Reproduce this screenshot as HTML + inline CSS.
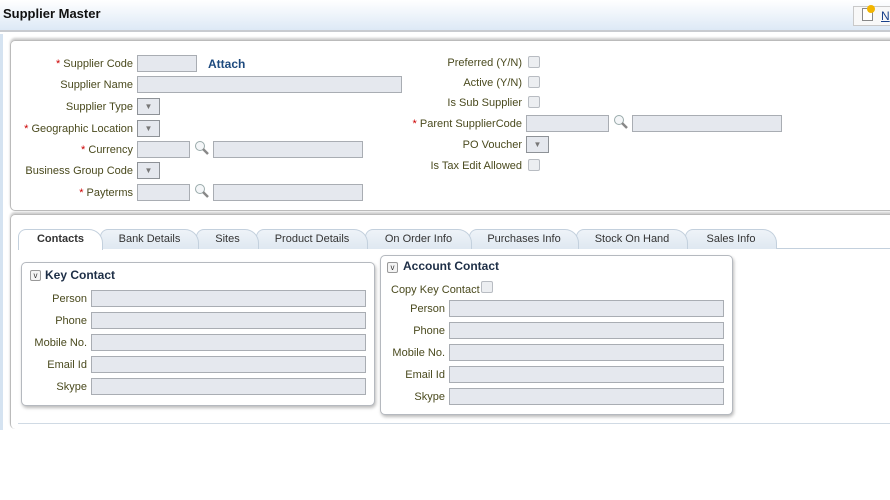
<!DOCTYPE html>
<html><head><style>
*{margin:0;padding:0;box-sizing:border-box}
body{width:890px;height:500px;background:#fff;font-family:"Liberation Sans",Tahoma,sans-serif;font-size:11px;color:#4a4a1e;position:relative;overflow:hidden}
.a{position:absolute}
.l{position:absolute;text-align:right;white-space:nowrap;line-height:16px}
.r{color:#c00}
.i{position:absolute;height:17px;background:#e5e8ee;border:1px solid #a9adb3}
.s{position:absolute;width:23px;height:17px;background:#e5e8ee;border:1px solid #8e9297;font-size:8px;color:#777;text-align:center;line-height:15px}
.c{position:absolute;width:12px;height:12px;border:1px solid #b8bcc2;border-radius:2px;background:#eceef1}
.m{position:absolute;width:18px;height:18px}
.tab{position:absolute;top:229px;height:20px;background:linear-gradient(#eef3f8,#dfe8f1);border:1px solid #c3d0dd;border-bottom:none;border-radius:8px 14px 0 0;text-align:center;line-height:19px;color:#333}
.box{position:absolute;border:1px solid #b5b9bf;border-radius:5px;background:#fff;box-shadow:1px 2px 3px #bbb}
.tg{position:absolute;width:11px;height:11px;border:1px solid #999;border-radius:2px;background:#f4f4f4;font-size:8px;line-height:9px;text-align:center;color:#333}
.h{position:absolute;font-weight:bold;color:#1d2e46;font-size:12px}
</style></head><body>
<div class="a" style="left:0;top:0;width:890px;height:32px;background:linear-gradient(#ffffff,#dde9f6);border-bottom:2px solid #c8cbd0"></div>
<div class="a" style="left:3px;top:6px;font-weight:bold;font-size:13px;color:#111">Supplier Master</div>
<div class="a" style="left:853px;top:6px;width:40px;height:20px;border:1px solid #c9c9c9;background:#f8f8f8"></div>
<div class="a" style="left:862px;top:8px;width:11px;height:13px;border:1px solid #888;background:#fff"></div>
<div class="a" style="left:867px;top:5px;width:8px;height:8px;border-radius:50%;background:#f2b500"></div>
<div class="a" style="left:881px;top:9px;color:#17408b;text-decoration:underline;font-size:12px">N</div>
<div class="a" style="left:0;top:34px;width:3px;height:396px;background:#d5e3f1"></div>
<div class="a" style="left:10px;top:40px;width:890px;height:171px;border:1px solid #bbb;border-radius:5px;border-right:none;box-shadow:0 -2px 2px #ccc"></div>

<div class="l" style="right:757px;top:56px"><span class="r">* </span>Supplier Code</div>
<div class="i" style="left:137px;top:55px;width:60px"></div>
<div class="a" style="left:208px;top:57px;font-weight:bold;color:#1d4a7e;font-size:12px">Attach</div>
<div class="l" style="right:757px;top:77px">Supplier Name</div>
<div class="i" style="left:137px;top:76px;width:265px"></div>
<div class="l" style="right:757px;top:99px">Supplier Type</div>
<div class="s" style="left:137px;top:98px">▼</div>
<div class="l" style="right:757px;top:121px"><span class="r">* </span>Geographic Location</div>
<div class="s" style="left:137px;top:120px">▼</div>
<div class="l" style="right:757px;top:142px"><span class="r">* </span>Currency</div>
<div class="i" style="left:137px;top:141px;width:53px"></div>
<svg class="m" style="left:193px;top:140px" viewBox="0 0 18 18"><circle cx="7" cy="6" r="4.5" fill="#f4f6f8" stroke="#9aa" /><path d="M10 9l5 5" stroke="#888" stroke-width="2.5"/></svg>
<div class="i" style="left:213px;top:141px;width:150px"></div>
<div class="l" style="right:757px;top:163px">Business Group Code</div>
<div class="s" style="left:137px;top:162px">▼</div>
<div class="l" style="right:757px;top:185px"><span class="r">* </span>Payterms</div>
<div class="i" style="left:137px;top:184px;width:53px"></div>
<svg class="m" style="left:193px;top:183px" viewBox="0 0 18 18"><circle cx="7" cy="6" r="4.5" fill="#f4f6f8" stroke="#9aa" /><path d="M10 9l5 5" stroke="#888" stroke-width="2.5"/></svg>
<div class="i" style="left:213px;top:184px;width:150px"></div>

<div class="l" style="right:368px;top:55px">Preferred (Y/N)</div>
<div class="c" style="left:528px;top:56px"></div>
<div class="l" style="right:368px;top:75px">Active (Y/N)</div>
<div class="c" style="left:528px;top:76px"></div>
<div class="l" style="right:368px;top:95px">Is Sub Supplier</div>
<div class="c" style="left:528px;top:96px"></div>
<div class="l" style="right:368px;top:116px"><span class="r">* </span>Parent SupplierCode</div>
<div class="i" style="left:526px;top:115px;width:83px"></div>
<svg class="m" style="left:612px;top:114px" viewBox="0 0 18 18"><circle cx="7" cy="6" r="4.5" fill="#f4f6f8" stroke="#9aa" /><path d="M10 9l5 5" stroke="#888" stroke-width="2.5"/></svg>
<div class="i" style="left:632px;top:115px;width:150px"></div>
<div class="l" style="right:368px;top:137px">PO Voucher</div>
<div class="s" style="left:526px;top:136px">▼</div>
<div class="l" style="right:368px;top:158px">Is Tax Edit Allowed</div>
<div class="c" style="left:528px;top:159px"></div>

<div class="a" style="left:10px;top:214px;width:890px;height:215px;border:1px solid #bbb;border-radius:5px;border-right:none;border-bottom:none;box-shadow:0 -2px 2px #ccc"></div>
<div class="a" style="left:18px;top:248px;width:872px;height:1px;background:#c3d0dd"></div>
<div class="tab" style="left:685px;width:92px">Sales Info</div>
<div class="tab" style="left:576px;width:112px">Stock On Hand</div>
<div class="tab" style="left:469px;width:110px">Purchases Info</div>
<div class="tab" style="left:365px;width:107px">On Order Info</div>
<div class="tab" style="left:256px;width:112px">Product Details</div>
<div class="tab" style="left:196px;width:63px">Sites</div>
<div class="tab" style="left:100px;width:99px">Bank Details</div>
<div class="tab" style="left:18px;width:85px;background:#fff;font-weight:bold;height:21px">Contacts</div>

<div class="box" style="left:21px;top:262px;width:354px;height:144px"></div>
<div class="tg" style="left:30px;top:270px">v</div>
<div class="h" style="left:45px;top:268px">Key Contact</div>
<div class="l" style="right:803px;top:291px">Person</div><div class="i" style="left:91px;top:290px;width:275px"></div>
<div class="l" style="right:803px;top:313px">Phone</div><div class="i" style="left:91px;top:312px;width:275px"></div>
<div class="l" style="right:803px;top:335px">Mobile No.</div><div class="i" style="left:91px;top:334px;width:275px"></div>
<div class="l" style="right:803px;top:357px">Email Id</div><div class="i" style="left:91px;top:356px;width:275px"></div>
<div class="l" style="right:803px;top:379px">Skype</div><div class="i" style="left:91px;top:378px;width:275px"></div>

<div class="box" style="left:380px;top:255px;width:353px;height:160px"></div>
<div class="tg" style="left:387px;top:262px">v</div>
<div class="h" style="left:403px;top:259px">Account Contact</div>
<div class="l" style="left:391px;top:282px;text-align:left">Copy Key Contact</div><div class="c" style="left:481px;top:281px"></div>
<div class="l" style="right:445px;top:301px">Person</div><div class="i" style="left:449px;top:300px;width:275px"></div>
<div class="l" style="right:445px;top:323px">Phone</div><div class="i" style="left:449px;top:322px;width:275px"></div>
<div class="l" style="right:445px;top:345px">Mobile No.</div><div class="i" style="left:449px;top:344px;width:275px"></div>
<div class="l" style="right:445px;top:367px">Email Id</div><div class="i" style="left:449px;top:366px;width:275px"></div>
<div class="l" style="right:445px;top:389px">Skype</div><div class="i" style="left:449px;top:388px;width:275px"></div>
<div class="a" style="left:18px;top:423px;width:872px;height:1px;background:#d0dae4"></div>
</body></html>
